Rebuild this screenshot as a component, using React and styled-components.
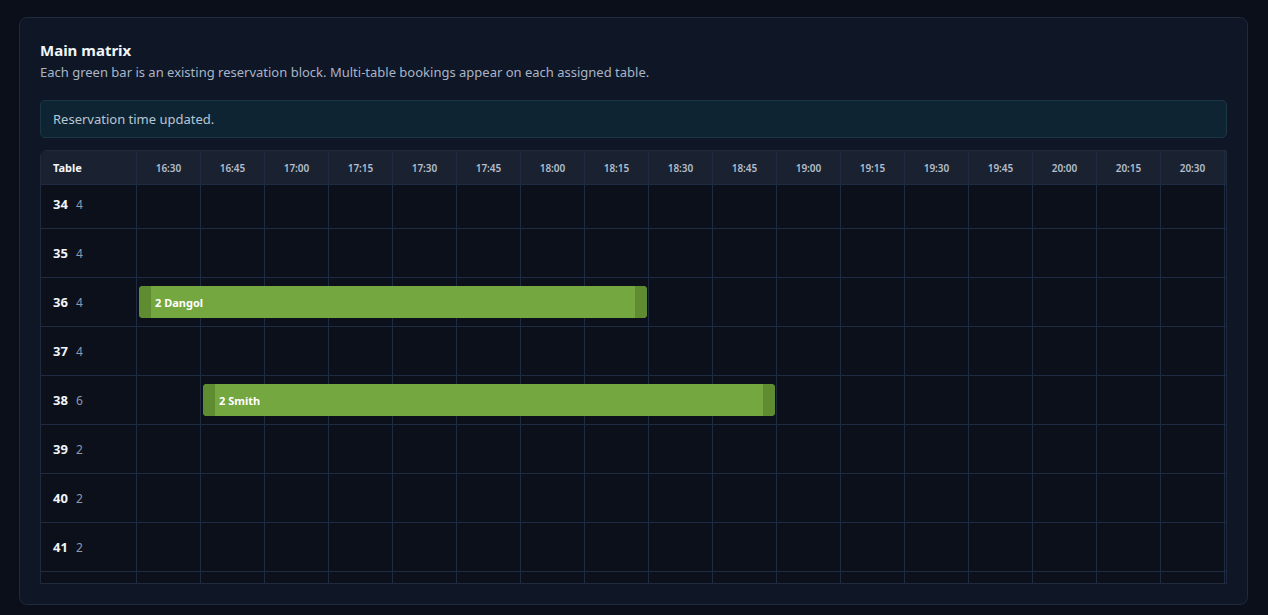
import React, { useEffect, useRef } from 'react';
import styled, { createGlobalStyle } from 'styled-components';

const Global = createGlobalStyle`
  html, body { margin: 0; background: #0a0f1a; }
  body { padding: 17px 20px 0 19px; font-family: 'Noto Sans', 'Open Sans', sans-serif; }
`;

const times = [];
for (let m = 16 * 60 + 30; m <= 23 * 60; m += 15) {
  times.push(`${Math.floor(m / 60)}:${String(m % 60).padStart(2, '0')}`);
}

const tables = [
  [30, 2], [31, 2], [32, 4], [33, 4], [34, 4], [35, 4], [36, 4], [37, 4], [38, 6],
  [39, 2], [40, 2], [41, 2], [42, 4], [43, 4], [44, 6], [45, 2], [46, 2], [47, 4],
];

const bookings = {
  36: { start: 0, span: 8, label: '2 Dangol' },
  38: { start: 1, span: 9, label: '2 Smith' },
};

const COL = 64;
const FIRST = 96;

const Card = styled.div`
  background: #0f1626;
  border: 1px solid #1f2a3d;
  border-radius: 8px;
  padding: 22px 20px 19px 20px;
  height: 545px;
`;

const Title = styled.div`
  color: #f1f5f9;
  font-weight: 700;
  font-size: 15px;
  line-height: 20px;
`;

const Sub = styled.div`
  color: #a9b5c6;
  font-size: 13px;
  margin-top: 3px;
  line-height: 18px;
`;

const Alert = styled.div`
  margin-top: 19px;
  background: #0f2432;
  border: 1px solid #1d3646;
  border-radius: 5px;
  color: #b8c6d4;
  font-size: 13px;
  padding: 9px 12px;
  line-height: 18px;
`;

const Scroller = styled.div`
  margin-top: 12px;
  height: 432px;
  overflow: scroll;
  border: 1px solid #1f2a3d;
  border-radius: 6px 0 0 0;
  background: #0b101b;
  &::-webkit-scrollbar { width: 15px; height: 15px; background: #fff; }
  &::-webkit-scrollbar-track { background: #fff; }
  &::-webkit-scrollbar-thumb { background: #8a8a8a; border-radius: 5px; border: 3px solid #fff; }
  &::-webkit-scrollbar-corner { background: #fff; }
  &::-webkit-scrollbar-button:single-button { background: #fff; width: 15px; height: 15px; display: block; }
`;

const Grid = styled.div`
  width: ${FIRST + times.length * COL}px;
`;

const Row = styled.div`
  display: flex;
  height: ${(p) => (p.$head ? 34 : 49)}px;
  position: ${(p) => (p.$head ? 'sticky' : 'relative')};
  top: 0;
  z-index: ${(p) => (p.$head ? 3 : 1)};
  background: ${(p) => (p.$head ? '#1a2232' : '#0b101b')};
  border-bottom: 1px solid #1e2b43;
  box-sizing: border-box;
`;

const FirstCell = styled.div`
  width: ${FIRST}px;
  flex: none;
  position: sticky;
  left: 0;
  z-index: 2;
  background: inherit;
  border-right: 1px solid #1e2b43;
  box-sizing: border-box;
  display: flex;
  align-items: center;
  padding-left: 12px;
  gap: 8px;
  color: #f1f5f9;
  font-weight: 700;
  font-size: ${(p) => (p.$head ? 11 : 13)}px;
`;

const Cap = styled.span`
  color: #8d9bb0;
  font-weight: 400;
  font-size: 12px;
`;

const Cell = styled.div`
  width: ${COL}px;
  flex: none;
  border-right: 1px solid #1e2b43;
  box-sizing: border-box;
  display: flex;
  align-items: center;
  justify-content: center;
  color: #b3bdcb;
  font-size: 10px;
  font-weight: 600;
`;

const Bar = styled.div`
  position: absolute;
  top: 8px;
  height: 32px;
  background: #74a73f;
  border-radius: 4px;
  overflow: hidden;
  display: flex;
  align-items: center;
  color: #fff;
  font-weight: 700;
  font-size: 11px;
  padding-left: 16px;
  box-sizing: border-box;
  &::before, &::after {
    content: '';
    position: absolute;
    top: 0;
    bottom: 0;
    width: 12px;
    background: #5f8c31;
  }
  &::before { left: 0; }
  &::after { right: 0; }
`;

export default function App() {
  const ref = useRef(null);
  useEffect(() => {
    if (ref.current) ref.current.scrollTop = 201;
  }, []);
  return (
    <>
      <Global />
      <Card>
        <Title>Main matrix</Title>
        <Sub>Each green bar is an existing reservation block. Multi-table bookings appear on each assigned table.</Sub>
        <Alert>Reservation time updated.</Alert>
        <Scroller ref={ref}>
          <Grid>
            <Row $head>
              <FirstCell $head>Table</FirstCell>
              {times.map((t) => (
                <Cell key={t}>{t}</Cell>
              ))}
            </Row>
            {tables.map(([n, c]) => {
              const b = bookings[n];
              return (
                <Row key={n}>
                  <FirstCell>
                    {n} <Cap>{c}</Cap>
                  </FirstCell>
                  {times.map((t) => (
                    <Cell key={t} />
                  ))}
                  {b && (
                    <Bar style={{ left: FIRST + b.start * COL + 2, width: b.span * COL - 4 }}>
                      {b.label}
                    </Bar>
                  )}
                </Row>
              );
            })}
          </Grid>
        </Scroller>
      </Card>
    </>
  );
}
